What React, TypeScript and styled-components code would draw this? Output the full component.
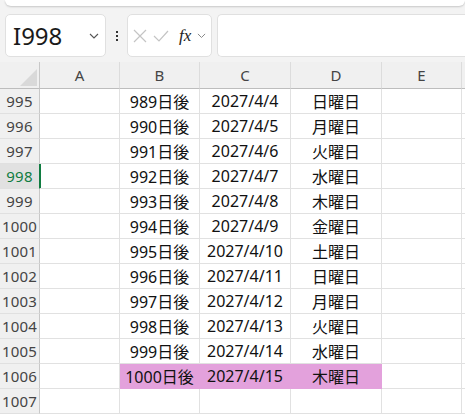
import styled, { createGlobalStyle, css } from "styled-components";

const GlobalStyle = createGlobalStyle`
  html, body {
    margin: 0;
    padding: 0;
    background: #f3f3f3;
  }
  body {
    font-family: "Noto Sans", "Noto Sans CJK JP", sans-serif;
  }
`;

const Window = styled.div`
  width: 465px;
  height: 414px;
  overflow: hidden;
  background: #f3f3f3;
  display: flex;
  flex-direction: column;
`;

const Ribbon = styled.div`
  height: 6px;
  margin: 0 0 0 5px;
  background: #fff;
  border-radius: 0 0 8px 8px;
  box-shadow: 0 1px 2px rgba(0, 0, 0, 0.18);
  overflow: hidden;
  font-size: 14px;
  line-height: 0;
  color: #222;
  padding-left: 22px;
  white-space: nowrap;
`;

const Toolbar = styled.div`
  display: flex;
  align-items: stretch;
  height: 43px;
  margin-top: 8px;
  padding-left: 5px;
`;

const Box = styled.div`
  background: #fff;
  border: 1px solid #e0e0e0;
  border-radius: 5px;
  box-sizing: border-box;
  display: flex;
  align-items: center;
`;

const NameBox = styled(Box)`
  width: 101px;
  padding: 0 6px 0 7px;
  justify-content: space-between;
  font-size: 24px;
  color: #1a1a1a;
`;

const Dots = styled.div`
  width: 21px;
  display: flex;
  flex-direction: column;
  align-items: center;
  justify-content: center;
  gap: 2px;
  & > span {
    width: 2px;
    height: 2px;
    background: #333;
  }
`;

const ToolsBox = styled(Box)`
  width: 85px;
  padding: 0 4px 0 5px;
  gap: 6px;
`;

const Fx = styled.span`
  font-family: "Liberation Serif", serif;
  font-style: italic;
  font-size: 17px;
  color: #222;
  margin-left: 4px;
`;

const FormulaBar = styled(Box)`
  flex: 1;
  margin-left: 5px;
  border-right: none;
  border-radius: 5px 0 0 5px;
`;

const Sheet = styled.div`
  margin-top: 5px;
  display: grid;
  grid-template-columns: 40px 80px 80px 91px 91px 80px 20px;
  grid-auto-rows: 25px;
  grid-template-rows: 27px;
  flex: 1;
  background: #fff;
`;

const Corner = styled.div`
  background: #f0f0f0;
  border-right: 1px solid #c8c8c8;
  border-bottom: 1px solid #bdbdbd;
  position: relative;
  &::after {
    content: "";
    position: absolute;
    right: 2px;
    bottom: 2px;
    border-style: solid;
    border-width: 0 0 17px 17px;
    border-color: transparent transparent #d9d9d9 transparent;
  }
`;

const ColHead = styled.div`
  background: #f0f0f0;
  border-right: 1px solid #dcdcdc;
  border-bottom: 1px solid #bdbdbd;
  display: flex;
  align-items: center;
  justify-content: center;
  font-size: 15px;
  color: #444;
`;

const RowHead = styled.div<{ $active?: boolean }>`
  background: ${(p) => (p.$active ? "#e1e1e1" : "#f0f0f0")};
  border-right: 1px solid ${(p) => (p.$active ? "#107c41" : "#c8c8c8")};
  border-bottom: 1px solid #e0e0e0;
  display: flex;
  align-items: center;
  justify-content: center;
  font-size: 15px;
  letter-spacing: 0.2px;
  color: ${(p) => (p.$active ? "#107c41" : "#444")};
`;

const Cell = styled.div<{ $fill?: boolean; $active?: boolean }>`
  border-right: 1px solid #e1e1e1;
  border-bottom: 1px solid #e1e1e1;
  display: flex;
  align-items: center;
  justify-content: center;
  font-size: 16px;
  color: #111;
  white-space: nowrap;
  ${(p) =>
    p.$fill &&
    css`
      background: #e3a1dc;
      border-right-color: #e3a1dc;
      border-bottom-color: #e3a1dc;
    `}
  ${(p) =>
    p.$active &&
    css`
      box-shadow: inset 1px 0 0 #107c41;
    `}
`;

const Chevron = ({ size = 10, color = "#555" }: { size?: number; color?: string }) => (
  <svg width={size} height={size * 0.6} viewBox="0 0 10 6" fill="none">
    <path d="M1 1l4 4 4-4" stroke={color} strokeWidth="1.1" />
  </svg>
);

const days = ["日", "月", "火", "水", "木", "金", "土"];
const rows = Array.from({ length: 13 }, (_, i) => i);

export default function App() {
  return (
    <>
      <GlobalStyle />
      <Window>
        <Ribbon />
        <Toolbar>
          <NameBox>
            <span>I998</span>
            <Chevron />
          </NameBox>
          <Dots>
            <span />
            <span />
            <span />
          </Dots>
          <ToolsBox>
            <svg width="14" height="14" viewBox="0 0 14 14">
              <path d="M1 1l12 12M13 1L1 13" stroke="#c4c4c4" strokeWidth="1.2" />
            </svg>
            <svg width="16" height="14" viewBox="0 0 16 14">
              <path d="M1 7l5 5L15 2" stroke="#c4c4c4" strokeWidth="1.2" fill="none" />
            </svg>
            <Fx>fx</Fx>
            <Chevron size={9} color="#888" />
          </ToolsBox>
          <FormulaBar />
        </Toolbar>
        <Sheet>
          <Corner />
          {["A", "B", "C", "D", "E", ""].map((c, i) => (
            <ColHead key={i}>{c}</ColHead>
          ))}
          {rows.map((i) => {
            const n = 995 + i;
            const has = n <= 1006;
            const active = n === 998;
            const fill = n === 1006;
            return [
              <RowHead key={`h${n}`} $active={active}>
                {n}
              </RowHead>,
              <Cell key={`a${n}`} $active={active} />,
              <Cell key={`b${n}`} $fill={fill}>
                {has ? `${989 + i}日後` : ""}
              </Cell>,
              <Cell key={`c${n}`} $fill={fill}>
                {has ? `2027/4/${4 + i}` : ""}
              </Cell>,
              <Cell key={`d${n}`} $fill={fill}>
                {has ? `${days[i % 7]}曜日` : ""}
              </Cell>,
              <Cell key={`e${n}`} />,
              <Cell key={`f${n}`} />,
            ];
          })}
        </Sheet>
      </Window>
    </>
  );
}
